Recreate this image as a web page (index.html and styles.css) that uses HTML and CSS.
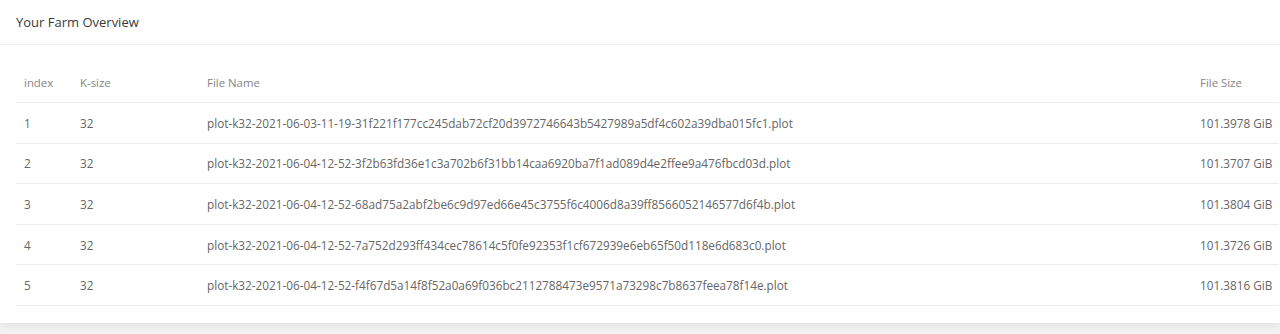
FILE: index.html
```html
<!DOCTYPE html>
<html>
<head>
<meta charset="utf-8">
<link rel="stylesheet" href="styles.css">
</head>
<body>
<div class="card">
  <div class="card-header">Your Farm Overview</div>
  <div class="card-body">
    <table class="plots">
      <colgroup>
        <col class="c-index"><col class="c-k"><col class="c-name"><col class="c-size">
      </colgroup>
      <thead>
        <tr><th>index</th><th>K-size</th><th>File Name</th><th>File Size</th></tr>
      </thead>
      <tbody>
        <tr><td>1</td><td>32</td><td>plot-k32-2021-06-03-11-19-31f221f177cc245dab72cf20d3972746643b5427989a5df4c602a39dba015fc1.plot</td><td class="right">101.3978 GiB</td></tr>
        <tr><td>2</td><td>32</td><td>plot-k32-2021-06-04-12-52-3f2b63fd36e1c3a702b6f31bb14caa6920ba7f1ad089d4e2ffee9a476fbcd03d.plot</td><td class="right">101.3707 GiB</td></tr>
        <tr><td>3</td><td>32</td><td>plot-k32-2021-06-04-12-52-68ad75a2abf2be6c9d97ed66e45c3755f6c4006d8a39ff8566052146577d6f4b.plot</td><td class="right">101.3804 GiB</td></tr>
        <tr><td>4</td><td>32</td><td>plot-k32-2021-06-04-12-52-7a752d293ff434cec78614c5f0fe92353f1cf672939e6eb65f50d118e6d683c0.plot</td><td class="right">101.3726 GiB</td></tr>
        <tr><td>5</td><td>32</td><td>plot-k32-2021-06-04-12-52-f4f67d5a14f8f52a0a69f036bc2112788473e9571a73298c7b8637feea78f14e.plot</td><td class="right">101.3816 GiB</td></tr>
      </tbody>
    </table>
  </div>
</div>
</body>
</html>
```

FILE: styles.css
```css
html, body {
  margin: 0;
  padding: 0;
}
body {
  background: #f2f2f2;
  font-family: "Open Sans", "Noto Sans", sans-serif;
  height: 334px;
}
.card {
  background: #fff;
  box-shadow: 0 2px 8px rgba(0, 0, 0, 0.07);
}
.card-header {
  height: 45px;
  box-sizing: border-box;
  padding: 13px 16px 0;
  font-size: 13px;
  color: #3a3a3a;
  border-bottom: 1px solid #eeeeee;
}
.card-body {
  padding: 18px 1px 17px 16px;
}
.plots {
  width: 100%;
  border-collapse: collapse;
  table-layout: fixed;
  font-size: 11.75px;
}
.c-index { width: 56px; }
.c-k { width: 127px; }
.c-size { width: 87px; }
.plots th, .plots td {
  padding: 0 8px;
  text-align: left;
  white-space: nowrap;
  border-bottom: 1px solid #ececec;
}
.plots th {
  height: 39px;
  font-size: 11.4px;
  font-weight: 400;
  color: #858585;
}
.plots td {
  height: 39.6px;
  color: #666666;
}
.plots .right {
  text-align: right;
}
```
